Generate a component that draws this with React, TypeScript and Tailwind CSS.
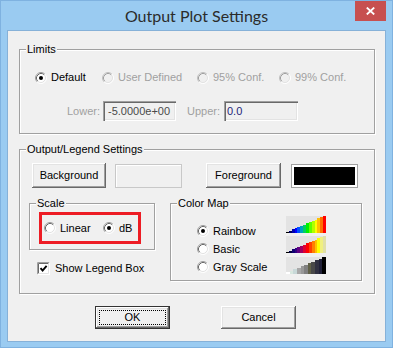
import React from "react";

const raised =
  "bg-[#f0f0f0] shadow-[inset_-1px_-1px_0_#696969,inset_1px_1px_0_#fff,inset_-2px_-2px_0_#a0a0a0,inset_2px_2px_0_#e3e3e3]";
const sunken =
  "bg-[#f0f0f0] shadow-[inset_1px_1px_0_#a0a0a0,inset_2px_2px_0_#696969,inset_-1px_-1px_0_#fff,inset_-2px_-2px_0_#e3e3e3]";
const etched =
  "border border-[#a0a0a0] shadow-[inset_1px_1px_0_#fff,1px_1px_0_#fff]";

const Radio = ({ checked = false, disabled = false }) => (
  <svg width="12" height="12" viewBox="0 0 12 12" className="shrink-0">
    <circle cx="6" cy="6" r="5" fill={disabled ? "#f0f0f0" : "#fff"} />
    <path d="M2.11 9.89A5.5 5.5 0 0 1 9.89 2.11" fill="none" stroke={disabled ? "#c0c0c0" : "#a0a0a0"} />
    <path d="M9.89 2.11A5.5 5.5 0 0 1 2.11 9.89" fill="none" stroke="#fff" />
    <path d="M2.82 9.18A4.5 4.5 0 0 1 9.18 2.82" fill="none" stroke={disabled ? "#a0a0a0" : "#696969"} />
    <path d="M9.18 2.82A4.5 4.5 0 0 1 2.82 9.18" fill="none" stroke="#e3e3e3" />
    {checked && <circle cx="6" cy="6" r="2" fill="#000" />}
  </svg>
);

const RadioItem = ({
  label,
  checked,
  disabled,
  className = "",
}: {
  label: string;
  checked?: boolean;
  disabled?: boolean;
  className?: string;
}) => (
  <div className={`flex items-center ${className}`}>
    <Radio checked={checked} disabled={disabled} />
    <span className={`ml-[4px] ${disabled ? "text-[#a0a0a0]" : "text-black"}`}>{label}</span>
  </div>
);

const Checkbox = () => (
  <svg width="13" height="13" viewBox="0 0 13 13" className="shrink-0">
    <rect width="13" height="13" fill="#fff" />
    <path d="M0.5 12.5V0.5H12.5" stroke="#a0a0a0" fill="none" />
    <path d="M1.5 11.5V1.5H11.5" stroke="#696969" fill="none" />
    <path d="M0.5 12.5H12.5V0.5" stroke="#fff" fill="none" />
    <path d="M1.5 11.5H11.5V1.5" stroke="#e3e3e3" fill="none" />
    <path d="M3.5 6.2L5.6 8.5L9.6 3.8" stroke="#000" strokeWidth="1.9" fill="none" />
  </svg>
);

const Swatch = ({ colors }: { colors: string[] }) => {
  const n = colors.length;
  const w = 40 / n;
  return (
    <svg width="40" height="17" viewBox="0 0 40 17" className="block" shapeRendering="crispEdges">
      <rect width="40" height="17" fill="#e3e3e3" />
      {colors.map((c, i) => {
        const h = ((i + 1) / n) * 17;
        return <rect key={i} x={i * w} y={17 - h} width={w + 0.3} height={h} fill={c} />;
      })}
    </svg>
  );
};

const rainbow = [
  "#000000", "#000060", "#0000b0", "#0000ff", "#0050ff", "#00a0c0", "#00d060",
  "#00f000", "#60ff00", "#b0ff00", "#ffff00", "#ffc000", "#ff7000", "#ff0000",
];
const basic = [
  "#000000", "#000040", "#100070", "#300080", "#600080", "#a00060", "#e00030",
  "#ff0000", "#ff4000", "#ff8000", "#ffc000", "#ffff00", "#f0f080", "#e0e0a8",
];
const gray = [
  "#ffffff", "#d8e8e0", "#c8d8d8", "#a8a8a8", "#989898", "#808080",
  "#606048", "#484848", "#303040", "#202038", "#000000",
];

export default function App() {
  return (
    <div className="w-[393px] h-[348px] bg-[#9acbf1] border border-[#7fb2e0] flex flex-col font-['Liberation_Sans',Arial,sans-serif] text-[11px] leading-[13px] text-black">
      <div className="relative h-[29px] flex items-center justify-center">
        <span className="font-['Segoe_UI',Lato,sans-serif] text-[16px] leading-[20px] text-[#2b2b2b]">
          Output Plot Settings
        </span>
        <div className="absolute right-[6px] top-0 w-[31px] h-[20px] bg-[#c75050] flex items-center justify-center">
          <svg width="9" height="8" viewBox="0 0 9 8">
            <path d="M0.8 0.6L8.2 7.4M8.2 0.6L0.8 7.4" stroke="#fff" strokeWidth="1.9" />
          </svg>
        </div>
      </div>

      <div className="mx-[6px] mb-[5px] flex-1 border border-[#86b1d8] bg-[#f0f0f0] flex flex-col pl-[11px] pr-[10px] pt-[12px]">
        {/* Limits */}
        <fieldset className={etched}>
          <legend className="ml-[6px] px-[1px] bg-[#f0f0f0]">Limits</legend>
          <div className="pl-[15px] pt-[15px] pb-[12px]">
            <div className="flex items-center h-[13px]">
              <RadioItem label="Default" checked className="w-[67px]" />
              <RadioItem label="User Defined" disabled className="w-[95px]" />
              <RadioItem label="95% Conf." disabled className="w-[82px]" />
              <RadioItem label="99% Conf." disabled />
            </div>
            <div className="flex items-center h-[20px] mt-[17px]">
              <span className="ml-[32px] w-[36px] text-[#a0a0a0]">Lower:</span>
              <div className={`w-[73px] h-[20px] flex items-center pl-[5px] text-[#4a4a4a] ${sunken}`}>
                -5.0000e+00
              </div>
              <span className="ml-[11px] w-[37px] text-[#a0a0a0]">Upper:</span>
              <div className={`w-[74px] h-[20px] flex items-center pl-[3px] text-[#1e1e78] ${sunken}`}>
                0.0
              </div>
            </div>
          </div>
        </fieldset>

        {/* Output / Legend */}
        <fieldset className={`mt-[9px] ${etched}`}>
          <legend className="ml-[6px] px-[1px] bg-[#f0f0f0]">Output/Legend Settings</legend>
          <div className="pt-[7px] pb-[12px]">
            <div className="flex items-center h-[25px] pl-[12px]">
              <div className={`w-[74px] h-[25px] flex items-center justify-center ${raised}`}>Background</div>
              <div className="ml-[9px] w-[67px] h-[24px] border border-[#c8c8c8] bg-[#f0f0f0] shadow-[inset_1px_1px_0_#fff]" />
              <div className={`ml-[24px] w-[75px] h-[25px] flex items-center justify-center ${raised}`}>Foreground</div>
              <div className="ml-[10px] w-[67px] h-[24px] border border-[#a0a0a0] bg-white p-[2px]">
                <div className="w-full h-full bg-black" />
              </div>
            </div>

            <div className="flex items-start mt-[9px]">
              <div className="ml-[9px] flex flex-col">
                <fieldset className={`w-[126px] ${etched}`}>
                  <legend className="ml-[6px] px-[1px] bg-[#f0f0f0]">Scale</legend>
                  <div className="pt-[2px] pb-[5px] pl-[9px]">
                    <div className="w-[102px] h-[32px] border-[3px] border-[#ed1c24] flex items-center pl-[2px]">
                      <RadioItem label="Linear" className="w-[59px]" />
                      <RadioItem label="dB" checked />
                    </div>
                  </div>
                </fieldset>
                <div className="flex items-center mt-[12px] ml-[8px] h-[13px]">
                  <Checkbox />
                  <span className="ml-[5px]">Show Legend Box</span>
                </div>
              </div>

              <fieldset className={`ml-[15px] w-[192px] ${etched}`}>
                <legend className="ml-[6px] px-[1px] bg-[#f0f0f0]">Color Map</legend>
                <div className="flex items-start pl-[26px] pb-[4px]">
                  <div className="w-[89px] pt-[12px] flex flex-col">
                    <RadioItem label="Rainbow" checked className="h-[18px]" />
                    <RadioItem label="Basic" className="h-[18px]" />
                    <RadioItem label="Gray Scale" className="h-[18px]" />
                  </div>
                  <div className="pt-[6px] flex flex-col">
                    <Swatch colors={rainbow} />
                    <div className="mt-[3px]">
                      <Swatch colors={basic} />
                    </div>
                    <div className="mt-[4px]">
                      <Swatch colors={gray} />
                    </div>
                  </div>
                </div>
              </fieldset>
            </div>
          </div>
        </fieldset>

        <div className="flex mt-[12px]">
          <div className="ml-[76px] w-[75px] h-[23px] border border-[#333] flex">
            <div className={`flex-1 flex p-[3px] ${raised}`}>
              <div className="flex-1 border border-dotted border-black flex items-center justify-center">OK</div>
            </div>
          </div>
          <div className={`ml-[51px] w-[75px] h-[23px] flex items-center justify-center ${raised}`}>Cancel</div>
        </div>
      </div>
    </div>
  );
}
